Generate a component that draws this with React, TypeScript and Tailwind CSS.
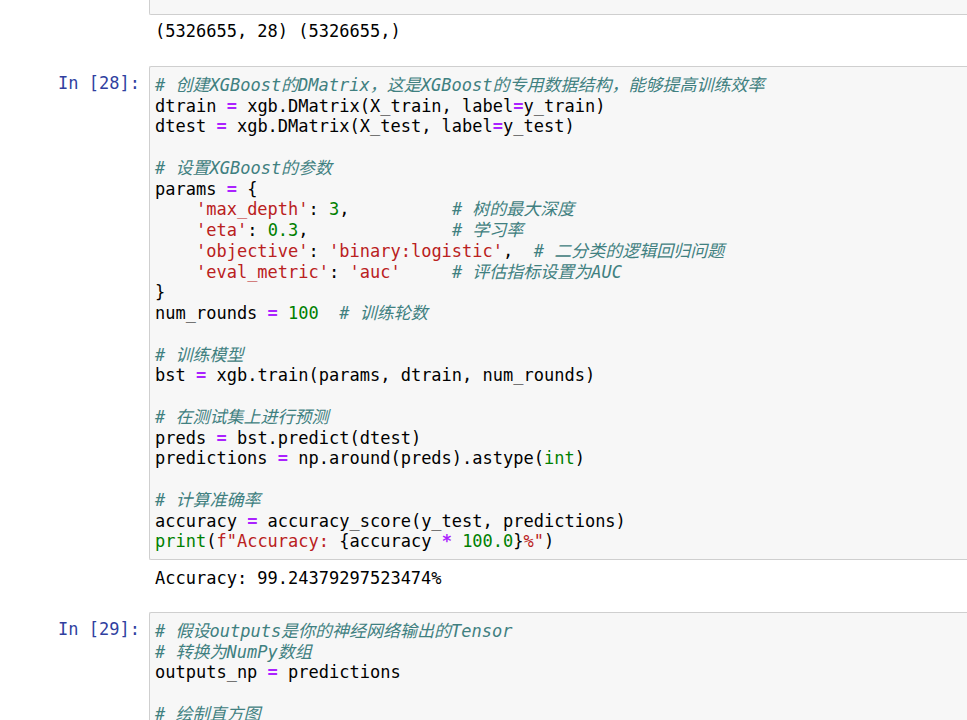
import React from 'react';

type Tok = [string, string?];

const C = 'text-[#408080] italic';
const S = 'text-[#ba2121]';
const N = 'text-[#008000]';
const O = 'text-[#aa22ff] font-bold';
const B = 'text-[#008000]';

const cell28: Tok[][] = [
  [['# 创建XGBoost的DMatrix，这是XGBoost的专用数据结构，能够提高训练效率', C]],
  [['dtrain '], ['=', O], [' xgb.DMatrix(X_train, label'], ['=', O], ['y_train)']],
  [['dtest '], ['=', O], [' xgb.DMatrix(X_test, label'], ['=', O], ['y_test)']],
  [],
  [['# 设置XGBoost的参数', C]],
  [['params '], ['=', O], [' {']],
  [['    '], ["'max_depth'", S], [': '], ['3', N], [',          '], ['# 树的最大深度', C]],
  [['    '], ["'eta'", S], [': '], ['0.3', N], [',              '], ['# 学习率', C]],
  [['    '], ["'objective'", S], [': '], ["'binary:logistic'", S], [',  '], ['# 二分类的逻辑回归问题', C]],
  [['    '], ["'eval_metric'", S], [': '], ["'auc'", S], ['     '], ['# 评估指标设置为AUC', C]],
  [['}']],
  [['num_rounds '], ['=', O], [' '], ['100', N], ['  '], ['# 训练轮数', C]],
  [],
  [['# 训练模型', C]],
  [['bst '], ['=', O], [' xgb.train(params, dtrain, num_rounds)']],
  [],
  [['# 在测试集上进行预测', C]],
  [['preds '], ['=', O], [' bst.predict(dtest)']],
  [['predictions '], ['=', O], [' np.around(preds).astype('], ['int', B], [')']],
  [],
  [['# 计算准确率', C]],
  [['accuracy '], ['=', O], [' accuracy_score(y_test, predictions)']],
  [['print', B], ['('], ['f"Accuracy: ', S], ['{accuracy '], ['*', O], [' '], ['100.0', N], ['}'], ['%"', S], [')']],
];

const cell29: Tok[][] = [
  [['# 假设outputs是你的神经网络输出的Tensor', C]],
  [['# 转换为NumPy数组', C]],
  [['outputs_np '], ['=', O], [' predictions']],
  [],
  [['# 绘制直方图', C]],
];

const Code = ({ lines }: { lines: Tok[][] }) => (
  <div className="flex flex-col">
    {lines.map((line, i) => (
      <div key={i} className="h-[20.75px] whitespace-pre">
        {line.length === 0
          ? ' '
          : line.map(([t, cls], j) => (
              <span key={j} className={cls}>
                {t}
              </span>
            ))}
      </div>
    ))}
  </div>
);

const Cell = ({ n, lines, output }: { n: number; lines: Tok[][]; output?: string }) => (
  <div className="flex flex-col">
    <div className="flex">
      <div className="w-[149px] shrink-0 pt-[7px] pr-[9px] text-right text-[#303f9f] leading-[20.75px]">
        In [{n}]:
      </div>
      <div className="flex-1 rounded-l-[2px] border border-r-0 border-[#cfcfcf] bg-[#f7f7f7] pl-[5px] pt-[6px] pb-[9px]">
        <Code lines={lines} />
      </div>
    </div>
    {output && (
      <div className="pl-[155px] pt-[8px] leading-[20.8px] whitespace-pre text-black">{output}</div>
    )}
  </div>
);

export default function App() {
  return (
    <div
      className="h-[720px] w-[967px] overflow-hidden bg-white text-[17px] text-black"
      style={{ fontFamily: '"DejaVu Sans Mono", "Noto Sans CJK SC", monospace' }}
    >
      <div className="flex flex-col">
        <div className="flex">
          <div className="w-[149px] shrink-0" />
          <div className="h-[15px] flex-1 rounded-bl-[2px] border border-t-0 border-r-0 border-[#cfcfcf] bg-[#f7f7f7]" />
        </div>
        <div className="pl-[155px] pt-[6px] leading-[20.8px] whitespace-pre">(5326655, 28) (5326655,)</div>
        <div className="h-[24px]" />
        <Cell n={28} lines={cell28} output="Accuracy: 99.24379297523474%" />
        <div className="h-[23px]" />
        <Cell n={29} lines={cell29} />
      </div>
    </div>
  );
}
